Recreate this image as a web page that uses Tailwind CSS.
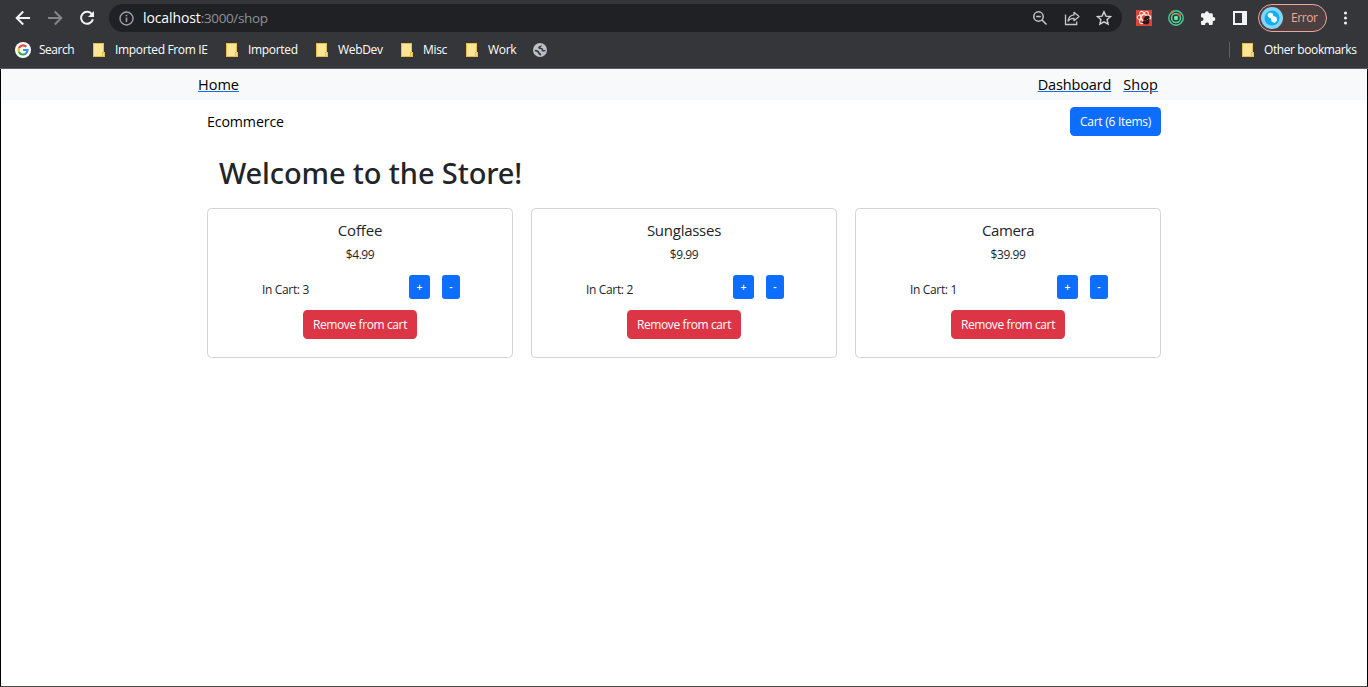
<!DOCTYPE html>
<html lang="en">
<head>
<meta charset="utf-8">
<title>Shop</title>
<script src="https://cdn.jsdelivr.net/npm/@tailwindcss/browser@4"></script>
</head>
<body class="h-[687px] w-[1368px] overflow-hidden bg-white font-['Open_Sans','Noto_Sans',sans-serif] text-[#212529]">
<svg class="hidden">
  <symbol id="folder" viewBox="0 0 12 14">
    <path d="M0 0h11v14H0z" fill="#e8bd4a"/>
    <path d="M1 1h9v12H1z" fill="#ffe694"/>
    <path d="M9 9h3v5H9z" fill="#e8bd4a"/>
    <path d="M10 10h1v3h-1z" fill="#ffe08a"/>
  </symbol>
</svg>
<div class="flex h-full flex-col border-x border-b border-x-black border-b-[#4f4742]">
  <header class="-mx-px h-[69px] shrink-0 border-b border-[#5d5e61] bg-[#35363a] text-white">
    <div class="flex h-9 items-center pl-[15px]">
      <svg class="size-4 shrink-0" viewBox="0 0 16 16" fill="none" stroke="#f1f3f4" stroke-width="2"><path d="M15 8H2M8.2 1.5 1.7 8l6.500 6.500"/></svg>
      <svg class="ml-4 size-4 shrink-0" viewBox="0 0 16 16" fill="none" stroke="#85868a" stroke-width="2"><path d="M1 8h13M7.800 1.500 14.300 8l-6.500 6.500"/></svg>
      <svg class="ml-4 size-4 shrink-0" viewBox="0 0 16 16" fill="none"><path d="M13 4.400A6 6 0 1 0 13.900 9.200" stroke="#f1f3f4" stroke-width="2"/><path d="M15 1v6H9z" fill="#f1f3f4"/></svg>
      <div class="ml-[14px] flex h-7 w-[1013px] shrink-0 items-center rounded-full bg-[#202124] pl-[10px] pr-[10px]">
        <svg class="size-[15px]" viewBox="0 0 15 15" fill="none" stroke="#9aa0a6" stroke-width="1.400"><circle cx="7.500" cy="7.500" r="6.500"/><path d="M7.500 6.500v4.500M7.500 3.700v1.600" stroke-width="1.600"/></svg>
        <span class="ml-[9px] text-[14px] leading-5 tracking-[-0.1px] text-[#8f9295]"><span class="text-white">localhost</span><span class="text-[13.500px] tracking-[-0.36px]">:3000/shop</span></span>
        <svg class="ml-auto size-4" viewBox="0 0 16 16" fill="none" stroke="#c4c6c8" stroke-width="1.500"><circle cx="6.500" cy="6.500" r="4.700"/><path d="m10 10 4.500 4.500M4.200 6.500h4.600"/></svg>
        <svg class="ml-4 size-4" viewBox="0 0 16 16" fill="none" stroke="#c4c6c8" stroke-width="1.300"><path d="M1.500 4.500v10h11.200V11.500"/><path d="M10 2.300 15 6.500l-5 4.200V8.300C7.300 8.200 5.500 9 4 11c.4-3.400 2.500-5.700 6-6.100z" stroke-linejoin="round"/></svg>
        <svg class="ml-4 size-4" viewBox="0 0 16 16" fill="none" stroke="#d3d5d7" stroke-width="1.400"><path d="m8 1.800 1.900 4.300 4.700.4-3.500 3.100 1 4.600L8 11.800l-4.100 2.400 1-4.600-3.500-3.100 4.700-.4z"/></svg>
      </div>
      <svg class="ml-[14px] size-4 shrink-0" viewBox="0 0 16 16" fill="none"><path d="M0 0h16v16H0z" fill="#dc4536"/><g stroke="#fbe9e7" stroke-width="1.100"><ellipse cx="8" cy="7.500" rx="6.800" ry="2.700"/><ellipse cx="8" cy="7.500" rx="6.800" ry="2.700" transform="rotate(60 8 7.500)"/><ellipse cx="8" cy="7.500" rx="6.800" ry="2.700" transform="rotate(120 8 7.500)"/></g><path d="M9 6.500 12 5.500l1.500 1.800-1 1.400 1.500 1-1 1.300.5 2-2.500 1.500-3-.5-2-1.500 1.500-1.500 0-2z" fill="#2b1613"/><path d="M8.500 10.500h1M11 9.500h1" stroke="#dc4536"/></svg>
      <svg class="ml-4 size-4 shrink-0" viewBox="0 0 16 16" fill="none"><circle cx="8" cy="8" r="7.200" stroke="#46cf9c" stroke-width="1.400"/><circle cx="8" cy="8" r="4.500" stroke="#4fdc9c" stroke-width="1.400"/><circle cx="8" cy="8" r="2.200" fill="#5eeaa9"/><circle cx="4.300" cy="1.900" r="1.500" fill="#f26b2c"/><circle cx="11.500" cy="5" r="1.500" fill="#f2552c"/></svg>
      <svg class="ml-4 size-4 shrink-0" viewBox="0 0 16 16" fill="#f1f3f4"><path d="M5 3.200a1.900 1.900 0 0 1 3.900 0H11.500a1.300 1.300 0 0 1 1.300 1.300V7h.6a1.900 1.900 0 0 1 0 3.900h-.6v2.800a1.300 1.300 0 0 1-1.300 1.300H9v-.7a1.900 1.900 0 0 0-3.800 0v.7H2.300A1.300 1.300 0 0 1 1 13.700V11h.6a1.900 1.900 0 0 0 0-3.800H1V4.500a1.300 1.300 0 0 1 1.300-1.300z"/></svg>
      <svg class="ml-[17px] h-[14px] w-[14px] shrink-0" viewBox="0 0 14 14"><path d="M0 0h14v14H0z" fill="#f1f3f4"/><path d="M2 2h7v10H2z" fill="#35363a"/></svg>
      <div class="ml-[11px] flex h-7 w-[69px] shrink-0 items-center rounded-full border border-[#f0a49d] bg-[#49403f] pl-[2px]">
        <svg class="size-[22px] shrink-0" viewBox="0 0 22 22"><circle cx="11" cy="11" r="11" fill="#81d4fa"/><circle cx="11" cy="11" r="7.500" fill="#12aef5"/><path d="M6.500 7 9 5.500l3 1.200.3 2.300 3 1 1 3.500-2.800 2.500-3-1.500-.5-3L7 10z" fill="#f6fbfe"/></svg>
        <span class="ml-[8px] text-[12px] leading-4 tracking-[-0.45px] text-[#f2a69e]">Error</span>
      </div>
      <svg class="ml-4 h-[14px] w-[4px] shrink-0" viewBox="0 0 4 14" fill="#f1f3f4"><circle cx="2.500" cy="2" r="1.500"/><circle cx="2.500" cy="7" r="1.500"/><circle cx="2.500" cy="12" r="1.500"/></svg>
    </div>
    <nav class="flex h-7 items-center pl-[15px] text-[12px] leading-4 tracking-[-0.33px]">
      <div class="flex w-[78px] shrink-0 items-center">
        <svg class="size-4" viewBox="0 0 16 16" fill="none" stroke-width="2.100"><circle cx="8" cy="8" r="8" fill="#fff"/><path d="M11.300 4.800A4.600 4.600 0 0 0 3.900 6" stroke="#ea4335"/><path d="M3.900 5.900a4.700 4.700 0 0 0 0 4.200" stroke="#fbbc05"/><path d="M3.900 10a4.600 4.600 0 0 0 7 1.500" stroke="#34a853"/><path d="M8 8h4.600a4.600 4.600 0 0 1-1.800 3.600" stroke="#4285f4"/></svg>
        <span class="ml-2 tracking-[-0.5px]">Search</span>
      </div>
      <div class="flex w-[133px] shrink-0 items-center"><svg class="h-[14px] w-3"><use href="#folder"/></svg><span class="ml-[10px]">Imported From IE</span></div>
      <div class="flex w-[90px] shrink-0 items-center"><svg class="h-[14px] w-3"><use href="#folder"/></svg><span class="ml-[10px]">Imported</span></div>
      <div class="flex w-[85px] shrink-0 items-center"><svg class="h-[14px] w-3"><use href="#folder"/></svg><span class="ml-[10px]">WebDev</span></div>
      <div class="flex w-[65px] shrink-0 items-center"><svg class="h-[14px] w-3"><use href="#folder"/></svg><span class="ml-[10px]">Misc</span></div>
      <div class="flex w-[67px] shrink-0 items-center"><svg class="h-[14px] w-3"><use href="#folder"/></svg><span class="ml-[10px]">Work</span></div>
      <svg class="size-[14px] shrink-0" viewBox="0 0 14 14"><circle cx="7" cy="7" r="7" fill="#bdc1c6"/><path d="M9.500 2.300 6.500 3 5 4.500 6 6l2.500.2.300 2 1.500.6 2-.8-.8 2-2 1.800-1.500.3V10.500L6.500 9.500 6 8 3.800 7 1.700 6.700l.2 1.500 2.300.9L5.500 11l1.700 1.500 2.300-.8 2.500-2.500.7-2.400-2.200.4-.8-2L7.300 4.500 8 3.700z" fill="#3b3c40"/></svg>
      <div class="ml-auto mr-[11px] flex items-center">
        <span class="h-4 w-px bg-[#5f6064]"></span>
        <svg class="ml-3 h-[14px] w-3"><use href="#folder"/></svg>
        <span class="ml-[10px] w-[93px] whitespace-nowrap tracking-[-0.4px]">Other bookmarks</span>
      </div>
    </nav>
  </header>

  <nav class="flex h-[31px] shrink-0 items-center bg-[#f8f9fa] pl-[197px] pr-[209px] text-[14.500px] leading-5 text-black">
    <a class="tracking-[0px] underline decoration-[#0d6efd] decoration-1 underline-offset-1">Home</a>
    <a class="ml-auto tracking-[-0.14px] underline decoration-[#0d6efd] decoration-1 underline-offset-1">Dashboard</a>
    <a class="ml-3 tracking-[0.08px] underline decoration-[#0d6efd] decoration-1 underline-offset-1">Shop</a>
  </nav>

  <main class="mx-auto w-[954px]">
    <div class="flex items-start pt-[7px]">
      <span class="mt-[5px] text-[14.200px] leading-5 tracking-[-0.12px] text-black">Ecommerce</span>
      <button class="ml-auto h-[29px] w-[91px] rounded-[4.500px] bg-[#0d6efd] text-[12px] leading-[18px] tracking-[-0.26px] text-white">Cart (6 Items)</button>
    </div>
    <h1 class="mt-[19px] pl-3 font-['Noto_Sans',sans-serif] text-[29px] font-medium leading-9 tracking-[-0.12px]">Welcome to the Store!</h1>

    <div class="mt-[17px] grid grid-cols-3 gap-[18px] text-center text-[12px] leading-[18px]">
      <section class="h-[150px] rounded-[4.500px] border border-[#d3d3d4] pt-3">
        <h2 class="text-[15px] font-medium leading-[18px] tracking-[-0.15px]">Coffee</h2>
        <p class="mt-[7px] tracking-[-0.42px]">$4.99</p>
        <div class="mt-[11px] flex h-[27px] items-start pl-[54px] pr-[52px]">
          <span class="mt-[6px] tracking-[-0.34px]">In Cart: 3</span>
          <button class="ml-auto h-6 w-[21px] rounded-[3px] bg-[#0d6efd] text-[10.500px] font-semibold leading-4 text-white">+</button>
          <button class="ml-3 h-6 w-[18px] rounded-[3px] bg-[#0d6efd] text-[10.500px] font-semibold leading-4 text-white">-</button>
        </div>
        <button class="mt-[8px] h-[29px] w-[114px] rounded-[4.500px] bg-[#dc3545] tracking-[-0.39px] text-white">Remove from cart</button>
      </section>
      <section class="h-[150px] rounded-[4.500px] border border-[#d3d3d4] pt-3">
        <h2 class="text-[15px] font-medium leading-[18px] tracking-[-0.26px]">Sunglasses</h2>
        <p class="mt-[7px] tracking-[-0.42px]">$9.99</p>
        <div class="mt-[11px] flex h-[27px] items-start pl-[54px] pr-[52px]">
          <span class="mt-[6px] tracking-[-0.34px]">In Cart: 2</span>
          <button class="ml-auto h-6 w-[21px] rounded-[3px] bg-[#0d6efd] text-[10.500px] font-semibold leading-4 text-white">+</button>
          <button class="ml-3 h-6 w-[18px] rounded-[3px] bg-[#0d6efd] text-[10.500px] font-semibold leading-4 text-white">-</button>
        </div>
        <button class="mt-[8px] h-[29px] w-[114px] rounded-[4.500px] bg-[#dc3545] tracking-[-0.39px] text-white">Remove from cart</button>
      </section>
      <section class="h-[150px] rounded-[4.500px] border border-[#d3d3d4] pt-3">
        <h2 class="text-[15px] font-medium leading-[18px] tracking-[-0.4px]">Camera</h2>
        <p class="mt-[7px] tracking-[-0.41px]">$39.99</p>
        <div class="mt-[11px] flex h-[27px] items-start pl-[54px] pr-[52px]">
          <span class="mt-[6px] tracking-[-0.34px]">In Cart: 1</span>
          <button class="ml-auto h-6 w-[21px] rounded-[3px] bg-[#0d6efd] text-[10.500px] font-semibold leading-4 text-white">+</button>
          <button class="ml-3 h-6 w-[18px] rounded-[3px] bg-[#0d6efd] text-[10.500px] font-semibold leading-4 text-white">-</button>
        </div>
        <button class="mt-[8px] h-[29px] w-[114px] rounded-[4.500px] bg-[#dc3545] tracking-[-0.39px] text-white">Remove from cart</button>
      </section>
    </div>
  </main>
</div>
</body>
</html>
